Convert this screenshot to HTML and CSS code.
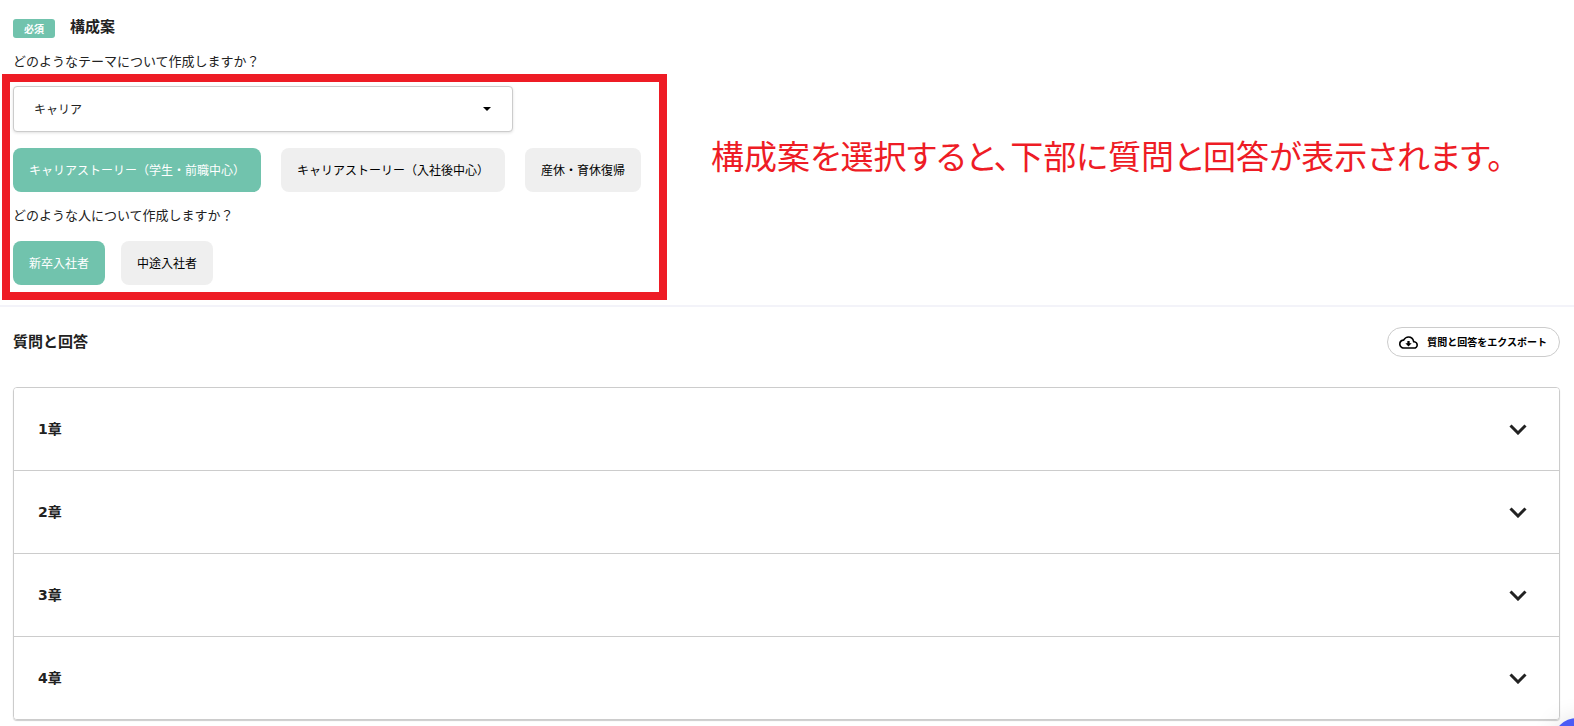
FILE: index.html
```html
<!DOCTYPE html>
<html lang="ja">
<head>
<meta charset="utf-8">
<title>構成案</title>
<link rel="stylesheet" href="styles.css">
</head>
<body>
<section class="plan">
  <header class="plan-head">
    <span class="badge">必須</span>
    <h2 class="title">構成案</h2>
  </header>
  <label class="question" for="theme">どのようなテーマについて作成しますか？</label>
  <div class="plan-body">
    <div class="frame">
      <div class="select-box">
        <select class="select" id="theme"><option>キャリア</option></select>
        <svg class="caret" viewBox="0 0 8 4" aria-hidden="true"><path d="M0 0h8L4 4z"/></svg>
      </div>
      <div class="choices choices-theme">
        <button class="choice choice-on" type="button">キャリアストーリー（学生・前職中心）</button>
        <button class="choice" type="button">キャリアストーリー（入社後中心）</button>
        <button class="choice" type="button">産休・育休復帰</button>
      </div>
      <p class="question">どのような人について作成しますか？</p>
      <div class="choices choices-person">
        <button class="choice choice-on" type="button">新卒入社者</button>
        <button class="choice" type="button">中途入社者</button>
      </div>
    </div>
    <p class="note">構成案を選択すると、下部に質問と回答が表示されます。</p>
  </div>
</section>
<section class="answers">
  <header class="answers-head">
    <h2 class="title">質問と回答</h2>
    <button class="export" type="button">
      <svg class="cloud" viewBox="0 0 24 24" aria-hidden="true"><path d="M19.35 10.04A7.49 7.49 0 0 0 12 4C9.11 4 6.6 5.64 5.35 8.04A5.994 5.994 0 0 0 0 14c0 3.31 2.69 6 6 6h13c2.76 0 5-2.24 5-5 0-2.64-2.05-4.78-4.65-4.96zM19 18H6c-2.21 0-4-1.79-4-4 0-2.05 1.53-3.76 3.56-3.97l1.07-.11.5-.95A5.469 5.469 0 0 1 12 6c2.62 0 4.88 1.86 5.39 4.43l.3 1.5 1.53.11A2.98 2.98 0 0 1 22 15c0 1.65-1.35 3-3 3zm-5.55-8h-2.9v3H8l4 4 4-4h-2.55z"/></svg>
      質問と回答をエクスポート
    </button>
  </header>
  <div class="chapters">
    <button class="chapter" type="button">1章<svg class="chevron" viewBox="0 0 18 11" aria-hidden="true"><path d="M1.5 1.5 9 9l7.5-7.5"/></svg></button>
    <button class="chapter" type="button">2章<svg class="chevron" viewBox="0 0 18 11" aria-hidden="true"><path d="M1.5 1.5 9 9l7.5-7.5"/></svg></button>
    <button class="chapter" type="button">3章<svg class="chevron" viewBox="0 0 18 11" aria-hidden="true"><path d="M1.5 1.5 9 9l7.5-7.5"/></svg></button>
    <button class="chapter" type="button">4章<svg class="chevron" viewBox="0 0 18 11" aria-hidden="true"><path d="M1.5 1.5 9 9l7.5-7.5"/></svg></button>
  </div>
</section>
<button class="chat" type="button" aria-label="チャット"></button>
</body>
</html>
```
FILE: styles.css
```css
* { box-sizing: border-box; }
body {
  margin: 0;
  overflow: hidden;
  background: #fff;
  color: #222;
  font-family: "Noto Sans CJK JP", sans-serif;
  font-size: 13px;
}
button, select { font-family: inherit; color: #000; cursor: pointer; }
h2, p { margin: 0; }

.plan { padding: 16px 0 5px 2px; border-bottom: 2px solid #f3f3f9; }
.plan-head { display: flex; align-items: center; gap: 15px; padding-left: 11px; }
.badge {
  margin-top: 2px;
  padding: 0 11px;
  border-radius: 3px;
  background: #71c3ad;
  color: #fff;
  font-size: 10px;
  font-weight: 700;
  line-height: 19px;
}
.title { padding-bottom: 2px; font-size: 15px; font-weight: 700; line-height: 20px; }
.question { display: block; line-height: 20px; }
.plan > .question { padding: 13px 0 3px 11px; }

.plan-body { display: flex; align-items: flex-start; gap: 44px; }
.frame { flex: none; padding: 4px 18px 7px 3px; border: 8px solid #ee1c25; }
.select-box { position: relative; width: 500px; max-width: 100%; }
.select {
  display: block;
  width: 100%;
  height: 46px;
  padding: 0 20px 2px;
  appearance: none;
  border: 1px solid #ccc;
  border-radius: 4px;
  background: #fff;
  box-shadow: 0 1px 3px rgba(0, 0, 0, .12);
  color: #222;
  font-size: 12px;
}
.caret { position: absolute; top: 21px; right: 22px; width: 8px; height: 4px; pointer-events: none; }
.choices { display: flex; }
.choices-theme { gap: 20px; margin: 16px 0 13px; }
.choices-person { gap: 16px; margin-top: 16px; }
.choice {
  height: 44px;
  padding: 0 16px 2px;
  border: 0;
  border-radius: 8px;
  background: #efefef;
  font-size: 12px;
  white-space: nowrap;
}
.choice-on { background: #71c3ad; color: #fff; }
.note {
  padding-top: 56px;
  color: #ee1c25;
  font-size: 33px;
  font-weight: 400;
  line-height: 50px;
  font-feature-settings: "palt";
  white-space: nowrap;
}

.answers { padding: 20px 14px 6px 13px; }
.answers-head { display: flex; align-items: center; justify-content: space-between; margin-bottom: 30px; }
.export {
  display: flex;
  align-items: center;
  gap: 9px;
  height: 30px;
  padding: 0 12px 2px 11px;
  border: 1px solid #ccc;
  border-radius: 15px;
  background: #fff;
  font-size: 10px;
  font-weight: 700;
}
.cloud { width: 19px; height: 19px; margin-top: 2px; }
.chapters {
  overflow: hidden;
  border: 1px solid #ccc;
  border-radius: 4px;
  box-shadow: 0 1px 1px rgba(0, 0, 0, .2);
}
.chapter {
  display: flex;
  align-items: center;
  justify-content: space-between;
  width: 100%;
  height: 83px;
  padding: 0 32px 2px 24px;
  border: 0;
  border-bottom: 1px solid #ccc;
  background: #fff;
  color: #222;
  font-family: "DejaVu Sans", "Noto Sans CJK JP", sans-serif;
  font-size: 14px;
  font-weight: 700;
}
.chapter:last-child { height: 82px; border-bottom: 0; }
.chevron { width: 18px; height: 11px; margin-top: 2px; fill: none; stroke: #222; stroke-width: 3; }

.chat {
  position: fixed;
  right: -27px;
  bottom: -40px;
  width: 48px;
  height: 48px;
  border: 0;
  border-radius: 50%;
  background: #4b5cf5;
  box-shadow: 0 0 24px rgba(0, 0, 0, .12);
}
```
